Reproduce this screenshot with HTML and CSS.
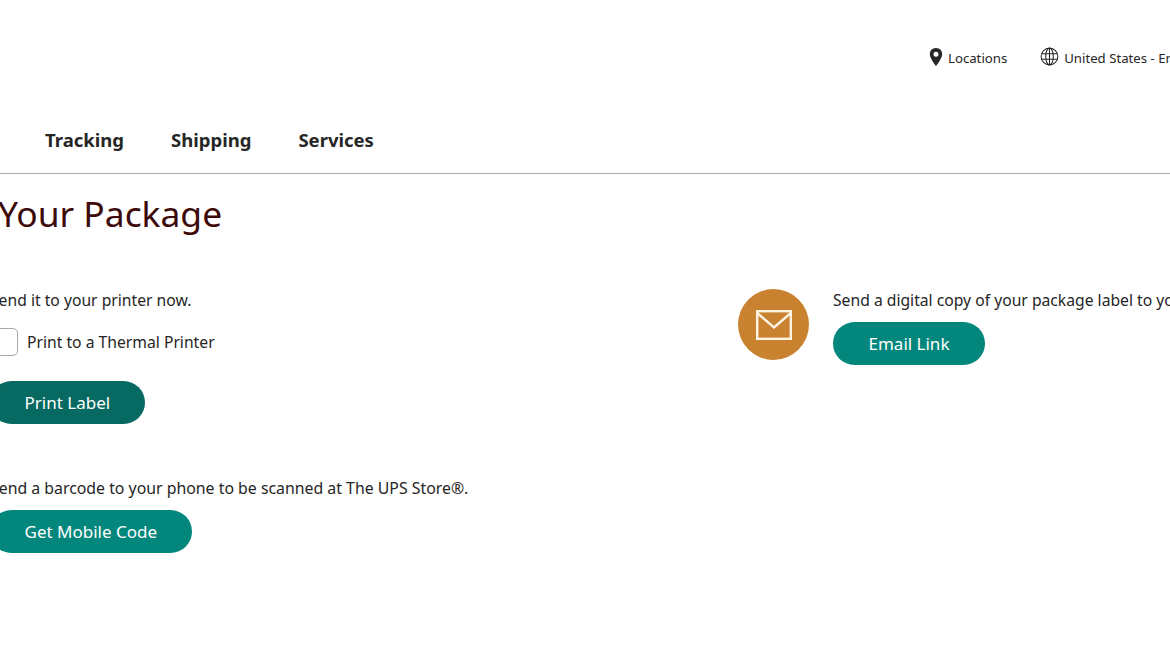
FILE: index.html
```html
<!DOCTYPE html>
<html lang="en">
<head>
  <meta charset="UTF-8" />
  <title>Your Package</title>
  <link rel="stylesheet" href="styles.css">
</head>
<body>
  <div class="page">
    <div class="utility">
      <a class="utility-link locations" href="#">
        <svg class="pin" viewBox="0 0 14 18" width="14" height="18"><path fill-rule="evenodd" d="M7 0C3.2 0 .8 2.8.8 6.2.8 10.4 7 18 7 18s6.2-7.6 6.2-11.8C13.200 2.800 10.800 0 7 0zm0 3.800a2.500 2.500 0 1 1 0 5 2.500 2.500 0 0 1 0-5z"/></svg>
        Locations
      </a>
      <a class="utility-link" href="#">
        <svg class="globe" viewBox="0 0 20 20" width="19" height="19"><g fill="none" stroke="#262626" stroke-width="1.100"><circle cx="10" cy="10" r="8.800"/><ellipse cx="10" cy="10" rx="4" ry="8.800"/><path d="M10 1.200v17.600M1.800 7h16.400M1.800 13h16.400"/></g></svg>
        United States - English
      </a>
    </div>

    <nav class="main-nav">
      <a href="#">Tracking</a>
      <a href="#">Shipping</a>
      <a href="#">Services</a>
    </nav>

    <main class="content">
      <h1>Your Package</h1>
      <div class="columns">
        <div class="col-left">
          <p>Send it to your printer now.</p>
          <label class="check-row"><span class="checkbox"></span>Print to a Thermal Printer</label>
          <a class="btn btn-dark" href="#">Print Label</a>
          <p class="barcode-text">Send a barcode to your phone to be scanned at The UPS Store®.</p>
          <a class="btn" href="#">Get Mobile Code</a>
        </div>
        <div class="col-right">
          <div class="mail-circle">
            <svg viewBox="0 0 36 30" width="36" height="30"><g fill="none" stroke="#fdf3e3" stroke-width="2.400"><rect x="1.200" y="1.200" width="33.600" height="27.600"/><path d="M1.200 3l16.800 14.500L34.800 3"/></g></svg>
          </div>
          <div class="email-box">
            <p>Send a digital copy of your package label to your email address.</p>
            <a class="btn" href="#">Email Link</a>
          </div>
        </div>
      </div>
    </main>
  </div>
</body>
</html>
```

FILE: styles.css
```css
html, body {
  margin: 0;
  height: 100%;
  background: #fff;
}

body {
  font-family: "Noto Sans", "Open Sans", sans-serif;
  color: #262626;
  font-size: 15.700px;
}

a {
  color: inherit;
  text-decoration: none;
}

p {
  margin: 0;
}

.page {
  width: 1170px;
  height: 663px;
  overflow: hidden;
}

.utility {
  display: flex;
  align-items: center;
  height: 116px;
  padding-left: 929px;
  white-space: nowrap;
  box-sizing: border-box;
}

.utility-link {
  display: flex;
  align-items: center;
  gap: 5px;
  font-size: 13.200px;
}

.locations {
  margin-right: 33px;
}

.pin {
  fill: #262626;
  margin-top: -2px;
}

.globe {
  margin-top: -4px;
}

.main-nav {
  display: flex;
  gap: 47px;
  height: 57px;
  padding-left: 45px;
  border-bottom: 1px solid #aaa;
  font-size: 18.500px;
  font-weight: 700;
  line-height: 48px;
}

.content {
  margin-left: -10px;
}

h1 {
  margin: 13.500px 0 0 8px;
  font-size: 35.400px;
  font-weight: 400;
  line-height: 50px;
  color: #3d0a0a;
}

.columns {
  display: flex;
  margin-top: 51.500px;
}

.col-left {
  width: 748px;
  flex: none;
}

.col-right {
  display: flex;
  gap: 24px;
  white-space: nowrap;
}

.check-row {
  display: flex;
  align-items: center;
  gap: 9px;
  margin-top: 17px;
}

.checkbox {
  width: 26px;
  height: 26px;
  border: 1px solid #aaa;
  border-radius: 5px;
}

.btn {
  display: inline-block;
  height: 43px;
  padding: 0 34.500px;
  border-radius: 22px;
  background: #03877c;
  color: #fff;
  font-size: 17px;
  line-height: 43px;
}

.btn-dark {
  background: #066a62;
  margin-top: 25px;
}

.barcode-text {
  margin-top: 53px;
  margin-bottom: 11px;
  font-size: 15.850px;
}

.mail-circle {
  display: flex;
  align-items: center;
  justify-content: center;
  width: 71px;
  height: 71px;
  border-radius: 50%;
  background: #c9822f;
  flex: none;
}

.email-box .btn {
  margin-top: 11px;
  padding: 0 35.500px;
}
```
